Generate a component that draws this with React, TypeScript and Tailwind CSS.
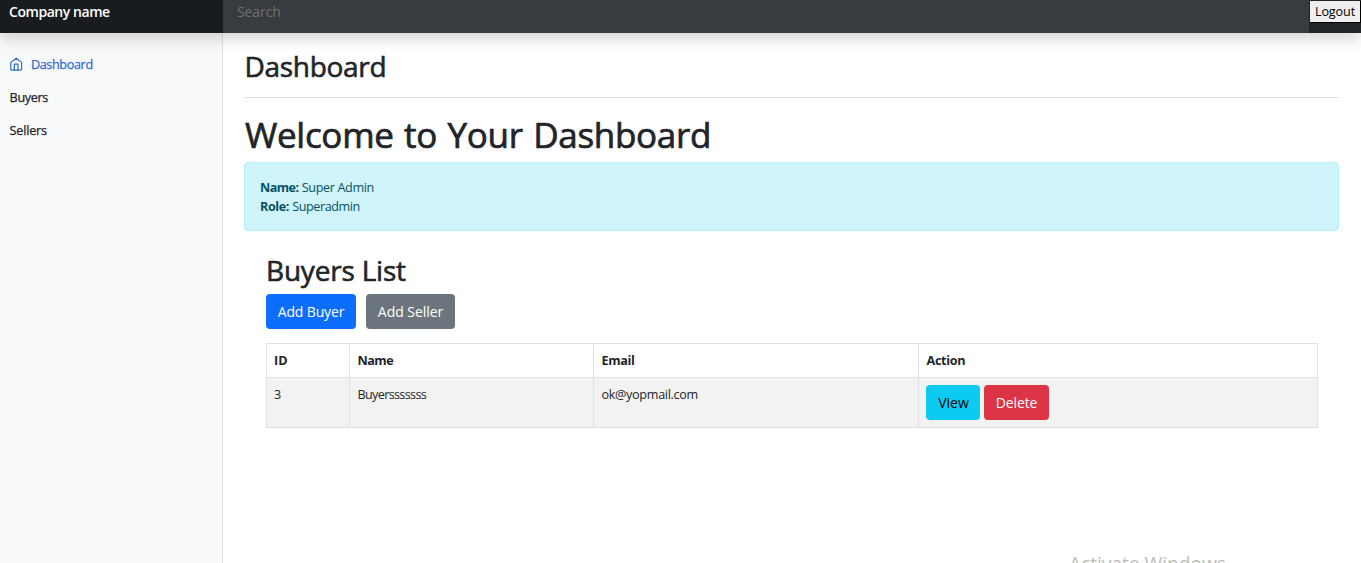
import type { ReactNode } from 'react';

function HomeIcon() {
  return (
    <svg
      viewBox="0 0 24 24"
      className="size-[14.4px] shrink-0 fill-none stroke-[#2e6bd0] stroke-2"
      strokeLinecap="round"
      strokeLinejoin="round"
      aria-hidden="true"
    >
      <path d="M3 9l9-7 9 7v11a2 2 0 0 1-2 2H5a2 2 0 0 1-2-2z" />
      <path d="M9 22V12h6v10" />
    </svg>
  );
}

function Button({ className, children }: { className: string; children: ReactNode }) {
  return (
    <button className={`flex h-[35px] shrink-0 items-center justify-center rounded-[4px] text-[14px] whitespace-nowrap ${className}`}>
      {children}
    </button>
  );
}

const cell = 'border-r border-b border-[#dee2e6] pt-[7px] pr-[7px] text-left align-top leading-[19px]';

export default function App() {
  return (
    <div className="relative flex h-[563px] w-full flex-col overflow-hidden bg-white font-['Open_Sans','Noto_Sans',sans-serif] text-[12.6px] text-[#212529]">
      <header className="relative z-10 flex h-[33px] shrink-0 bg-[#212529] shadow-[0_7px_14px_rgba(0,0,0,0.15)]">
        <div className="w-[223px] bg-[#191c1f] pl-[9px] text-[14px] leading-[24px] font-semibold tracking-[-0.45px] text-white">Company name</div>
        <div className="flex-1 bg-[#383b3f] pl-[14px] text-[14px] leading-[24px] tracking-[-0.1px] text-[#6c7074]">Search</div>
        <div className="w-[52px] pt-px pl-px">
          <button className="flex h-[22px] w-[51px] items-center justify-center border-r border-b border-black bg-[#efefef] pt-[2px] text-[12.6px] tracking-[-0.1px] text-black">Logout</button>
        </div>
      </header>

      <div className="flex flex-1">
        <nav className="flex w-[223px] shrink-0 flex-col border-r border-[#dee2e6] bg-[#f8f9fa] pt-[15px] pl-[9px] leading-[33px] text-[#212529]">
          <a className="flex h-[33px] items-center gap-[7.5px] tracking-[-0.35px] text-[#2e6bd0] [-webkit-text-stroke:0.25px]">
            <HomeIcon />
            Dashboard
          </a>
          <a className="h-[33px] pl-[0.6px] tracking-[-0.35px] [-webkit-text-stroke:0.25px]">Buyers</a>
          <a className="h-[33px] pl-[0.6px] tracking-[-0.2px] [-webkit-text-stroke:0.25px]">Sellers</a>
        </nav>

        <main className="flex-1 pr-[22px] pl-[21px]">
          <div className="h-[65px] border-b border-[#dee2e6] pt-[16px]">
            <h2 className="pl-[0.5px] text-[28px] leading-[34px] tracking-[-0.3px] [-webkit-text-stroke:0.6px]">Dashboard</h2>
          </div>
          <h1 className="mt-[15px] mb-[6px] h-[43px] pl-px text-[35px] leading-[43px] tracking-[-0.3px] [word-spacing:1.7px] [-webkit-text-stroke:0.7px]">Welcome to Your Dashboard</h1>
          <div className="h-[69px] rounded-[4px] border border-[#b6effb] bg-[#cff4fc] pt-[15px] pl-[15px] leading-[19px] text-[#055160]">
            <p>
              <strong className="tracking-[-0.55px]">Name:</strong> <span className="tracking-[-0.35px]">Super Admin</span>
            </p>
            <p>
              <strong className="tracking-[-0.4px]">Role:</strong> <span className="tracking-[-0.43px]">Superadmin</span>
            </p>
          </div>

          <section className="pt-[22px] pr-[21px] pl-[22px]">
            <h2 className="h-[41px] text-[28px] leading-[34px] tracking-[-0.2px] [-webkit-text-stroke:0.6px]">Buyers List</h2>
            <div className="flex gap-[10px]">
              <Button className="w-[90px] bg-[#0d6efd] tracking-[-0.15px] text-white">Add Buyer</Button>
              <Button className="w-[89px] bg-[#6c757d] tracking-[-0.05px] text-white">Add Seller</Button>
            </div>
            <table className="mt-[14px] w-[1052px] table-fixed border-separate border-spacing-0 border-t border-l border-[#dee2e6]">
              <colgroup>
                <col className="w-[83px]" />
                <col className="w-[244px]" />
                <col className="w-[325px]" />
                <col className="w-[399px]" />
              </colgroup>
              <thead>
                <tr className="h-[34px] font-bold">
                  <th className={`${cell} pl-[7px]`}>ID</th>
                  <th className={`${cell} pl-[7.5px] tracking-[-0.5px]`}>Name</th>
                  <th className={`${cell} pl-[7.5px] tracking-[-0.35px]`}>Email</th>
                  <th className={`${cell} pl-[7.5px] tracking-[-0.3px]`}>Action</th>
                </tr>
              </thead>
              <tbody>
                <tr className="h-[50px] bg-[#f2f2f2]">
                  <td className={`${cell} pl-[7px]`}>3</td>
                  <td className={`${cell} pl-[7.5px] tracking-[-0.65px]`}>Buyersssssss</td>
                  <td className={`${cell} pl-[7.5px] tracking-[-0.3px]`}>ok@yopmail.com</td>
                  <td className="border-r border-b border-[#dee2e6] pt-[7px] pl-[7px] align-top">
                    <div className="flex gap-[4px]">
                      <Button className="w-[54px] bg-[#0dcaf0] pl-px text-black">View</Button>
                      <Button className="w-[65px] bg-[#dc3545] tracking-[-0.15px] text-white">Delete</Button>
                    </div>
                  </td>
                </tr>
              </tbody>
            </table>
          </section>
        </main>
      </div>

      <div className="absolute top-[550px] left-[1069px] text-[19.3px] leading-[28px] tracking-[-0.08px] whitespace-nowrap text-[#bdbdbd]">Activate Windows</div>
    </div>
  );
}
